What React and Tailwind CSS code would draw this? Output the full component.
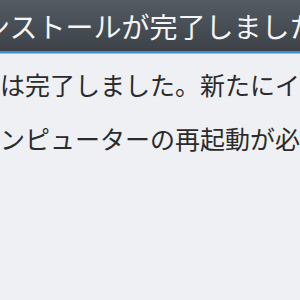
import React from "react";

const App = () => {
  return (
    <div
      className="w-[300px] h-[300px] overflow-hidden bg-[#eff0f3]"
      style={{ fontFamily: '"Noto Sans CJK JP", "Noto Sans", sans-serif' }}
    >
      {/* window title bar */}
      <div className="h-[51px] flex items-center bg-linear-to-b from-[#545b62] to-[#3c4248] overflow-hidden">
        <span className="ml-[-46px] whitespace-nowrap text-[28px] text-[#f4f5f6]">
          インストールが完了しました
        </span>
      </div>
      <div className="h-[3px] bg-[#3a8fd4] border-b border-[#8cc3ea]" />
      {/* message */}
      <div className="pt-[3px] text-[25px] leading-[54px] text-[#2b2b2b] whitespace-nowrap">
        <p className="ml-[0px]">は完了しました。新たにインストール</p>
        <p className="ml-[-25px]">コンピューターの再起動が必要です</p>
      </div>
    </div>
  );
};

export default App;
